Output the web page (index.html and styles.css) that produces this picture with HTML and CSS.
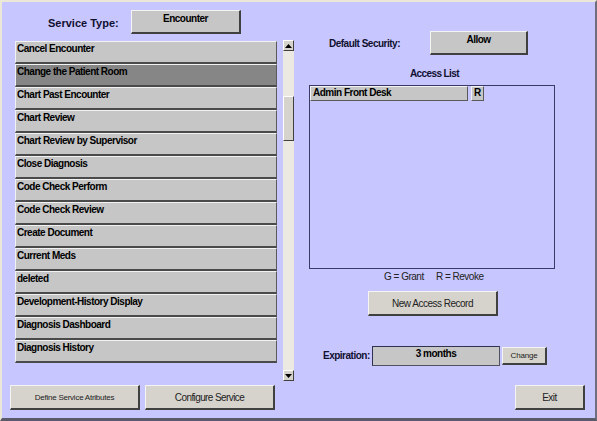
FILE: index.html
```html
<!DOCTYPE html>
<html>
<head>
<meta charset="utf-8">
<link rel="stylesheet" href="styles.css">
</head>
<body>
<div class="window">
  <div class="left">
    <div class="header">
      <span class="label svc-label">Service Type:</span>
      <div class="btn gray-btn enc-btn">Encounter</div>
    </div>
    <div class="list-area">
      <div class="list">
        <div class="item">Cancel Encounter</div>
        <div class="item selected">Change the Patient Room</div>
        <div class="item">Chart Past Encounter</div>
        <div class="item">Chart Review</div>
        <div class="item">Chart Review by Supervisor</div>
        <div class="item">Close Diagnosis</div>
        <div class="item">Code Check Perform</div>
        <div class="item">Code Check Review</div>
        <div class="item">Create Document</div>
        <div class="item">Current Meds</div>
        <div class="item">deleted</div>
        <div class="item">Development-History Display</div>
        <div class="item">Diagnosis Dashboard</div>
        <div class="item">Diagnosis History</div>
      </div>
      <div class="scrollbar">
        <div class="arrow up"><svg width="7" height="4" viewBox="0 0 7 4"><path d="M0 4 L3.5 0 L7 4 Z" fill="#000"/></svg></div>
        <div class="track">
          <div class="thumb"></div>
        </div>
        <div class="arrow down"><svg width="7" height="4" viewBox="0 0 7 4"><path d="M0 0 L3.5 4 L7 0 Z" fill="#000"/></svg></div>
      </div>
    </div>
    <div class="bottom-btns">
      <div class="btn beige-btn small-text">Define Service Atributes</div>
      <div class="btn beige-btn cfg-btn">Configure Service</div>
    </div>
  </div>
  <div class="right">
    <div class="sec-row">
      <span class="label">Default Security:</span>
      <div class="btn gray-btn allow-btn">Allow</div>
    </div>
    <div class="access-title">Access List</div>
    <div class="access-box">
      <div class="access-row">
        <div class="cell name">Admin Front Desk</div>
        <div class="cell flag">R</div>
      </div>
    </div>
    <div class="legend">G = Grant <span class="gap"></span>R = Revoke</div>
    <div class="btn beige-btn new-btn">New Access Record</div>
    <div class="exp-row">
      <span class="label">Expiration:</span>
      <div class="exp-box">3 months</div>
      <div class="btn beige-btn change-btn">Change</div>
    </div>
    <div class="exit-row">
      <div class="btn beige-btn exit-btn">Exit</div>
    </div>
  </div>
</div>
</body>
</html>
```

FILE: styles.css
```css
html, body {
  margin: 0;
  padding: 0;
  background: #c8c8ff;
}
.window {
  box-sizing: border-box;
  width: 597px;
  height: 421px;
  background: #c8c6fe;
  border-top: 2px solid #ebe8d8;
  border-left: 2px solid #ebe8d8;
  border-right: 2px solid #6e6e7e;
  border-bottom: 3px solid #5a5a6a;
  display: flex;
  font-family: "Liberation Sans", Arial, sans-serif;
  font-size: 10px;
  letter-spacing: -0.5px;
  color: #000;
}
.label {
  font-weight: bold;
  color: #101030;
}
.btn {
  box-sizing: border-box;
  text-align: center;
  border-top: 1px solid #f4f4f4;
  border-left: 1px solid #f4f4f4;
  border-right: 2px solid #404040;
  border-bottom: 2px solid #404040;
}
.gray-btn {
  background: #c6c6c6;
  font-weight: bold;
  padding-top: 2px;
}
.beige-btn {
  background: #d6d3cc;
  display: flex;
  align-items: center;
  justify-content: center;
  color: #222;
}
.small-text {
  font-size: 8px;
  letter-spacing: -0.25px;
}

/* left */
.left {
  width: 295px;
  display: flex;
  flex-direction: column;
}
.header {
  display: flex;
  align-items: center;
  margin-top: 8px;
  padding-left: 46px;
  height: 24px;
}
.svc-label {
  width: 83px;
  padding-top: 2px;
  font-size: 11px;
  letter-spacing: 0;
}
.enc-btn {
  width: 110px;
  height: 24px;
}
.list-area {
  display: flex;
  margin-top: 6px;
  padding-left: 13px;
  height: 341px;
}
.list {
  width: 262px;
  padding-top: 1px;
}
.item {
  box-sizing: border-box;
  height: 23px;
  background: #c6c6c6;
  border-top: 1px solid #f2f2f2;
  border-left: 1px solid #f2f2f2;
  border-right: 1px solid #5a5a5a;
  border-bottom: 2px solid #4a4a4a;
  font-weight: bold;
  padding: 1px 0 0 1px;
  line-height: 12px;
  white-space: nowrap;
}
.item.selected {
  background: #868686;
}
.scrollbar {
  margin-left: 6px;
  width: 11px;
  display: flex;
  flex-direction: column;
}
.arrow {
  box-sizing: border-box;
  height: 11px;
  background: #d6d3cc;
  border-top: 1px solid #fff;
  border-left: 1px solid #fff;
  border-right: 1px solid #404040;
  border-bottom: 1px solid #404040;
  display: flex;
  align-items: center;
  justify-content: center;
}
.track {
  flex: 1;
  background: #ece9e2;
  padding-top: 45px;
}
.thumb {
  box-sizing: border-box;
  height: 45px;
  background: #d6d3cc;
  border-top: 1px solid #fff;
  border-left: 1px solid #fff;
  border-right: 1px solid #404040;
  border-bottom: 1px solid #404040;
}
.bottom-btns {
  display: flex;
  gap: 5px;
  margin-top: 4px;
  padding-left: 8px;
}
.bottom-btns .btn {
  width: 130px;
  height: 25px;
}
.cfg-btn {
  letter-spacing: -0.6px;
}

/* right */
.right {
  flex: 1;
  display: flex;
  flex-direction: column;
}
.sec-row {
  display: flex;
  align-items: center;
  margin-top: 29px;
  padding-left: 32px;
  height: 24px;
}
.sec-row .label {
  width: 101px;
}
.allow-btn {
  width: 98px;
  height: 24px;
}
.access-title {
  margin-top: 12px;
  padding-left: 113px;
  font-weight: bold;
  color: #101030;
  height: 13px;
  line-height: 13px;
  letter-spacing: -0.6px;
}
.access-box {
  box-sizing: border-box;
  margin-top: 5px;
  margin-left: 12px;
  width: 246px;
  height: 184px;
  border: 1px solid #3a3a6a;
}
.access-row {
  display: flex;
  gap: 3px;
}
.cell {
  box-sizing: border-box;
  height: 15px;
  background: #c6c6c6;
  font-weight: bold;
  border-top: 1px solid #f2f2f2;
  border-left: 1px solid #f2f2f2;
  border-right: 1px solid #5a5a5a;
  border-bottom: 1px solid #5a5a5a;
  line-height: 12px;
  padding-left: 2px;
}
.cell.name {
  width: 158px;
}
.cell.flag {
  width: 13px;
}
.legend {
  margin-top: 1px;
  padding-left: 87px;
  height: 13px;
  line-height: 13px;
  color: #222;
  display: flex;
  white-space: pre;
}
.gap {
  width: 10px;
}
.new-btn {
  margin-top: 8px;
  margin-left: 71px;
  width: 130px;
  height: 25px;
}
.exp-row {
  display: flex;
  align-items: center;
  margin-top: 29px;
  padding-left: 26px;
  height: 21px;
}
.exp-row .label {
  width: 49px;
}
.exp-box {
  box-sizing: border-box;
  width: 128px;
  height: 20px;
  background: #c6c6c6;
  border-top: 1px solid #303050;
  border-left: 1px solid #303050;
  border-right: 1px solid #505060;
  border-bottom: 1px solid #505060;
  font-weight: bold;
  text-align: center;
  padding-top: 1px;
}
.change-btn {
  margin-left: 2px;
  width: 45px;
  height: 18px;
  font-size: 8px;
  letter-spacing: -0.2px;
}
.exit-row {
  display: flex;
  margin-top: 19px;
  padding-left: 218px;
}
.exit-btn {
  width: 70px;
  height: 25px;
}
```
